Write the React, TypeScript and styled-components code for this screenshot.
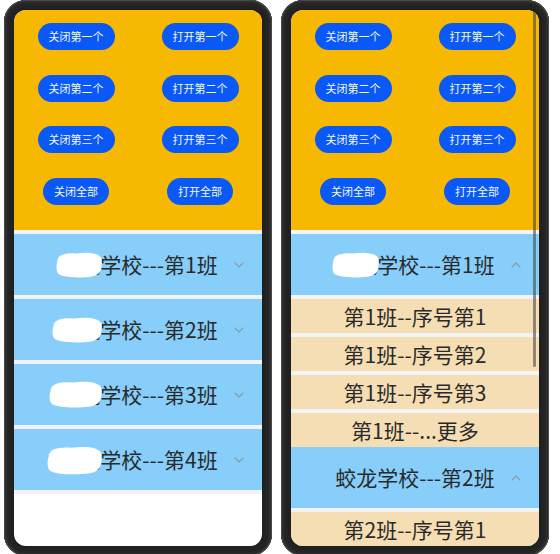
import React from "react";
import styled, { createGlobalStyle } from "styled-components";

const Global = createGlobalStyle`
  html, body { margin: 0; padding: 0; background: #ffffff; overflow: hidden; }
  body { font-family: "Noto Sans CJK SC", "Noto Sans", sans-serif; }
`;

const Page = styled.div`
  display: flex;
  gap: 9px;
  padding-left: 4px;
  height: 554px;
  align-items: flex-start;
`;

const Phone = styled.div`
  width: 248px;
  height: 536px;
  padding: 10px;
  border-radius: 22px;
  background: #1f1f1f;
  box-shadow: inset 0 0 0 1px #4a4a4a, inset 0 0 0 3px #2c2c2c, inset 0 0 4px 7px #262626;
  flex-shrink: 0;
`;

const Screen = styled.div`
  position: relative;
  width: 248px;
  height: 536px;
  border-radius: 12px;
  overflow: hidden;
  background: #ffffff;
`;

const Panel = styled.div`
  height: 220px;
  background: #f7b801;
  display: grid;
  grid-template-columns: 1fr 1fr;
  grid-auto-rows: 51.5px;
  align-content: start;
  justify-items: center;
  align-items: center;
  padding-top: 1px;
  box-sizing: border-box;
`;

const ActionButton = styled.button`
  height: 27px;
  padding: 0 11px;
  border: none;
  border-radius: 14px;
  background: #0a59f7;
  color: #f4f7ff;
  font-family: "Noto Sans CJK SC", sans-serif;
  font-size: 11px;
  line-height: 27px;
  white-space: nowrap;
`;

const Divider = styled.div`
  height: 4px;
  background: #f1f3f5;
`;

const Header = styled.div`
  height: 61px;
  background: #87cefa;
  display: flex;
  align-items: center;
  padding: 0 18px;
`;

const Title = styled.div`
  flex: 1;
  margin-left: 10px;
  text-align: center;
  font-size: 21px;
  color: #2a2a2a;
  line-height: 25px;
`;

const Masked = styled.span`
  position: relative;
  display: inline-block;
`;

const Blob = styled.svg<{ $x: number; $y: number; $w: number; $h: number }>`
  position: absolute;
  left: ${(p) => p.$x}px;
  top: ${(p) => p.$y}px;
  width: ${(p) => p.$w}px;
  height: ${(p) => p.$h}px;
`;

const Chevron = styled.svg`
  width: 10px;
  height: 6px;
  flex-shrink: 0;
`;

const Item = styled.div`
  height: 34px;
  background: #f5deb3;
  display: flex;
  align-items: center;
  justify-content: center;
  font-size: 21px;
  color: #2a2a2a;
`;

const Scrollbar = styled.div`
  position: absolute;
  right: 3px;
  top: 0;
  width: 3px;
  height: 357px;
  border-radius: 2px;
  background: rgba(60, 60, 60, 0.55);
`;

type Mask = { x: number; y: number; w: number; h: number };

const buttons = [
  ["关闭第一个", "打开第一个"],
  ["关闭第二个", "打开第二个"],
  ["关闭第三个", "打开第三个"],
  ["关闭全部", "打开全部"],
];

const RedactBlob = ({ m }: { m: Mask }) => (
  <Blob $x={m.x} $y={m.y} $w={m.w} $h={m.h} viewBox="0 0 100 50" preserveAspectRatio="none">
    <path
      d="M3 18 C3 5 22 1 44 3 C66 0 96 1 99 14 C100 30 99 44 78 47 C56 50 20 50 6 43 C0 38 0 26 3 18 Z"
      fill="#ffffff"
    />
  </Blob>
);

const Arrow = ({ up }: { up: boolean }) => (
  <Chevron viewBox="0 0 10 6">
    <path
      d={up ? "M1 5 L5 1 L9 5" : "M1 1 L5 5 L9 1"}
      fill="none"
      stroke="#8c9aa6"
      strokeWidth="1.1"
      strokeLinecap="round"
      strokeLinejoin="round"
    />
  </Chevron>
);

type Row =
  | { kind: "divider"; key: string }
  | { kind: "header"; key: string; n: number; open: boolean; mask: Mask | null }
  | { kind: "item"; key: string; text: string };

type PhoneProps = {
  expanded: number[];
  masks: (Mask | null)[];
  scrollbar?: boolean;
  maxRows?: number;
};

const itemLabels = (n: number) => [
  `第${n}班--序号第1`,
  `第${n}班--序号第2`,
  `第${n}班--序号第3`,
  `第${n}班--...更多`,
];

const buildRows = (expanded: number[], masks: (Mask | null)[]): Row[] => {
  const rows: Row[] = [{ kind: "divider", key: "d0" }];
  [1, 2, 3, 4].forEach((n, i) => {
    const open = expanded.includes(n);
    rows.push({ kind: "header", key: `h${n}`, n, open, mask: masks[i] });
    if (open) {
      itemLabels(n).forEach((t, j) => {
        rows.push({ kind: "divider", key: `d${n}-${j}` });
        rows.push({ kind: "item", key: `i${n}-${j}`, text: t });
      });
    } else {
      rows.push({ kind: "divider", key: `d${n}` });
    }
  });
  return rows;
};

const PhoneView = ({ expanded, masks, scrollbar, maxRows }: PhoneProps) => {
  const rows = buildRows(expanded, masks).slice(0, maxRows);
  return (
    <Phone>
      <Screen>
        <Panel>
          {buttons.flat().map((b) => (
            <ActionButton key={b}>{b}</ActionButton>
          ))}
        </Panel>
        {rows.map((r) => {
          if (r.kind === "divider") return <Divider key={r.key} />;
          if (r.kind === "item") return <Item key={r.key}>{r.text}</Item>;
          return (
            <Header key={r.key}>
              <Title>
                <Masked>
                  蛟龙
                  {r.mask && <RedactBlob m={r.mask} />}
                </Masked>
                学校---第{r.n}班
              </Title>
              <Arrow up={r.open} />
            </Header>
          );
        })}
        {scrollbar && <Scrollbar />}
      </Screen>
    </Phone>
  );
};

export default function App() {
  return (
    <>
      <Global />
      <Page>
        <PhoneView
          expanded={[]}
          masks={[
            { x: -2, y: 0, w: 46, h: 26 },
            { x: -6, y: 0, w: 50, h: 26 },
            { x: -9, y: -1, w: 53, h: 27 },
            { x: -11, y: -1, w: 55, h: 29 },
          ]}
        />
        <PhoneView
          expanded={[1, 2]}
          masks={[{ x: -3, y: 0, w: 47, h: 26 }, null, null, null]}
          scrollbar
          maxRows={14}
        />
      </Page>
    </>
  );
}
